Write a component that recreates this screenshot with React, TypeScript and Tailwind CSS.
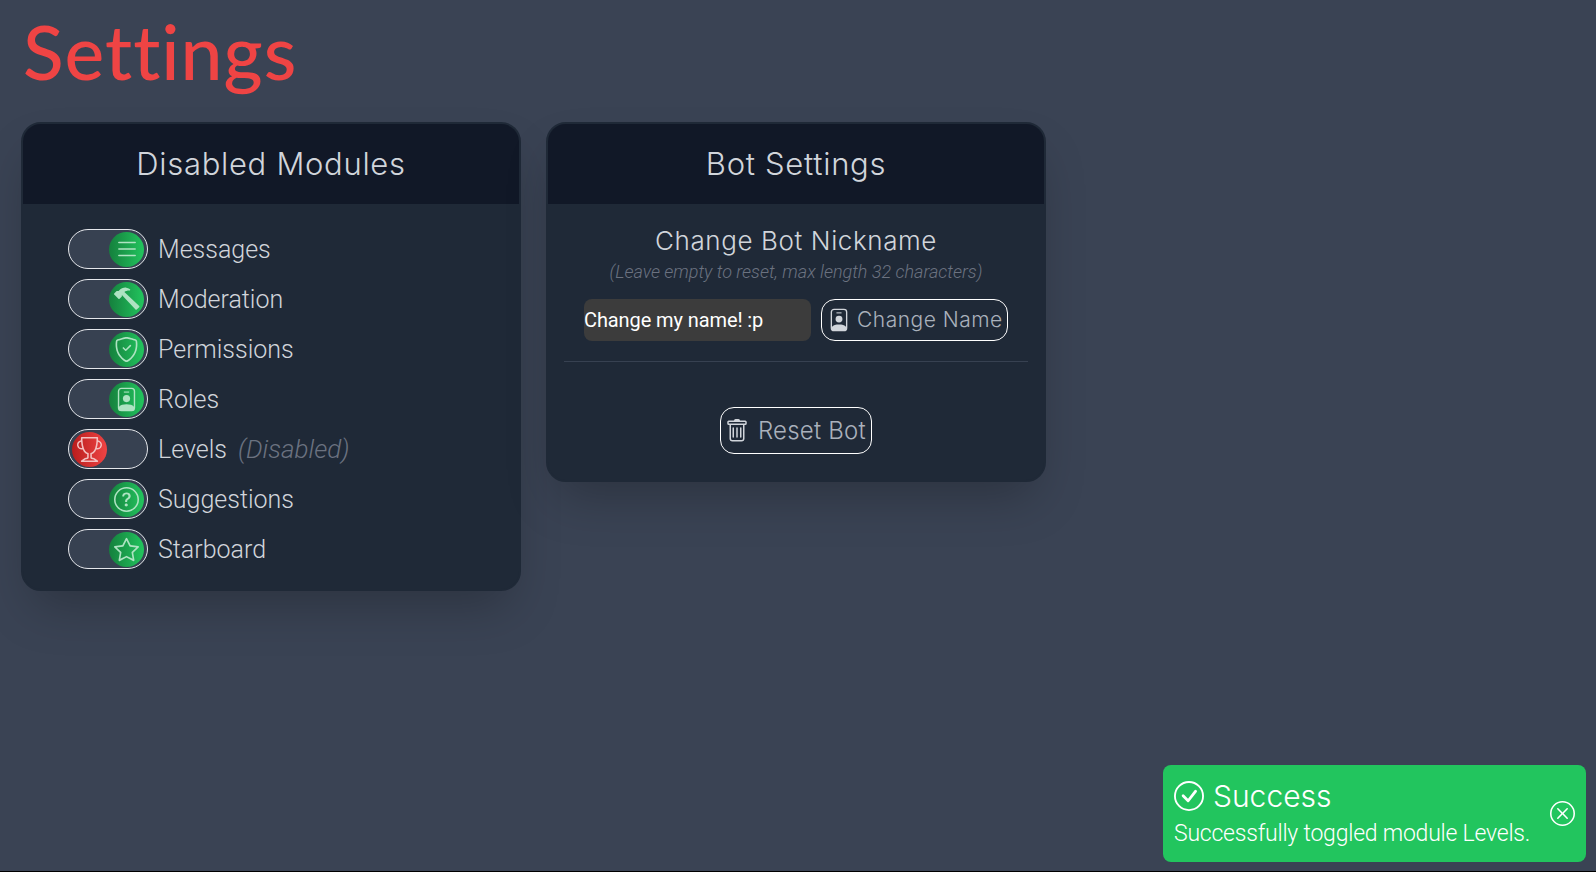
import {
  BsList,
  BsHammer,
  BsShieldCheck,
  BsTrophy,
  BsQuestionCircle,
  BsStar,
  BsTrash,
  BsCheckCircle,
  BsXCircle,
} from "react-icons/bs";
import { type ReactNode } from "react";

const ROBOTO = "font-['Roboto',sans-serif]";
const HEADING = "font-['Inter',sans-serif]";

// id badge: outline with a filled head and shoulders
const BadgeIcon = ({ size, className }: { size: number; className?: string }) => (
  <svg width={size} height={size} viewBox="0 0 16 16" fill="currentColor" className={className}>
    <rect x="2.9" y="0.9" width="10.2" height="14.2" rx="1.8" fill="none" stroke="currentColor" strokeWidth="0.9" />
    <path d="M6.3 2.9h3.4v.7H6.3z" />
    <circle cx="8" cy="7.4" r="2.3" />
    <path d="M3.2 14.9v-2.3c1-1.2 2.7-1.6 4.8-1.6s3.8.4 4.8 1.6v2.3z" />
  </svg>
);

const modules: { name: string; icon: ReactNode; disabled?: boolean }[] = [
  { name: "Messages", icon: <BsList size={26} /> },
  { name: "Moderation", icon: <BsHammer size={26} /> },
  { name: "Permissions", icon: <BsShieldCheck size={25} /> },
  { name: "Roles", icon: <BadgeIcon size={25} /> },
  { name: "Levels", icon: <BsTrophy size={25} />, disabled: true },
  { name: "Suggestions", icon: <BsQuestionCircle size={25} /> },
  { name: "Starboard", icon: <BsStar size={25} /> },
];

const Card = ({
  title,
  children,
}: {
  title: string;
  children: ReactNode;
}) => (
  <div className="w-[500px] overflow-hidden rounded-[20px] border-2 border-[#1f2937] bg-[#1f2937] shadow-2xl">
    <div
      className={`flex h-[80px] items-center justify-center bg-[#111827] text-[31px] font-light tracking-[0.7px] text-[#d1d5db] ${HEADING}`}>
      {title}
    </div>
    {children}
  </div>
);

const ModuleRow = ({
  name,
  icon,
  disabled,
}: {
  name: string;
  icon: ReactNode;
  disabled?: boolean;
}) => (
  <div className="flex h-[40px] items-center">
    {/* toggle knob sits left when the module is off */}
    <div
      className={`flex h-[40px] w-[80px] shrink-0 items-center rounded-full border border-[#e5e7eb] bg-[#374151] px-[3px] ${
        disabled ? "justify-start" : "justify-end"
      }`}>
      <div
        className={`flex h-[35px] w-[35px] items-center justify-center rounded-full bg-linear-to-r ${
          disabled
            ? "from-[#b91c1c] to-[#ef4444] text-[#f3c1c1]"
            : "from-[#15803d] to-[#22c55e] text-[#aee3c2]"
        }`}>
        {icon}
      </div>
    </div>
    <span className={`mt-[1px] ml-[10px] text-[25px] font-light text-[#d1d5db] ${ROBOTO}`}>
      {name}
    </span>
    {disabled && (
      <span className={`mt-[1px] ml-[11px] text-[26px] font-light italic text-[#6b7280] ${ROBOTO}`}>
        (Disabled)
      </span>
    )}
  </div>
);

const App = () => {
  return (
    <div className="h-[872px] w-full overflow-hidden bg-black">
      <div className="h-[871px] w-full bg-[#3a4354] pt-[6px]">
        <h1 className="ml-[23px] h-[90px] font-['Lato',sans-serif] text-[75px] leading-[90px] font-medium tracking-[1px] text-[#ef4444]">
          Settings
        </h1>

        <div className="mt-[26px] ml-[21px] flex items-start gap-[25px]">
          <Card title="Disabled Modules">
            <div className="flex flex-col gap-[10px] pt-[25px] pb-[20px] pl-[45px]">
              {modules.map((module) => (
                <ModuleRow key={module.name} {...module} />
              ))}
            </div>
          </Card>

          <Card title="Bot Settings">
            <div className="flex flex-col items-center pt-[19px]">
              <div className={`text-[26px] leading-[36px] font-light tracking-[0.6px] text-[#d1d5db] ${HEADING}`}>
                Change Bot Nickname
              </div>
              <div className={`mt-[1px] text-[18px] leading-[24px] font-light italic text-[#6b7280] ${ROBOTO}`}>
                (Leave empty to reset, max length 32 characters)
              </div>
              <div className="mt-[15px] flex gap-[10px]">
                <div
                  className={`flex h-[42px] w-[227px] items-center rounded-lg bg-[#3c3c3c] text-[20px] tracking-[-0.1px] text-white ${ROBOTO}`}>
                  Change my name! :p
                </div>
                <button
                  className={`flex h-[42px] w-[187px] items-center gap-[6px] rounded-[14px] border border-white pl-[5px] text-[21px] font-light tracking-[0.5px] text-[#aab1bc] ${HEADING}`}>
                  <BadgeIcon size={24} className="text-[#d1d5db]" />
                  Change Name
                </button>
              </div>
              <div className="mt-[20px] h-px w-[464px] bg-[#374151]" />
              <button
                className={`mt-[45px] mb-[26px] flex h-[47px] w-[152px] items-center gap-[9px] rounded-[14px] border border-white pl-[4px] text-[24px] font-light tracking-[0.2px] text-[#aab1bc] ${HEADING}`}>
                <BsTrash size={24} className="text-[#d1d5db]" />
                Reset Bot
              </button>
            </div>
          </Card>
        </div>
      </div>

      {/* toast */}
      <div className="fixed top-[765px] left-[1163px] flex h-[97px] w-[423px] items-center rounded-lg bg-[#22c55e] pr-[11px] pl-[11px] text-white">
        <div className="min-w-0 flex-1 pb-[1px]">
          <div className={`flex items-center gap-[9px] text-[30px] leading-[36px] font-light ${HEADING}`}>
            <BsCheckCircle size={30} />
            Success
          </div>
          <div className={`mt-[5px] text-[23px] leading-[30px] font-light tracking-[-0.22px] whitespace-nowrap ${ROBOTO}`}>
            Successfully toggled module Levels.
          </div>
        </div>
        <BsXCircle size={25} />
      </div>
    </div>
  );
};

export default App;
